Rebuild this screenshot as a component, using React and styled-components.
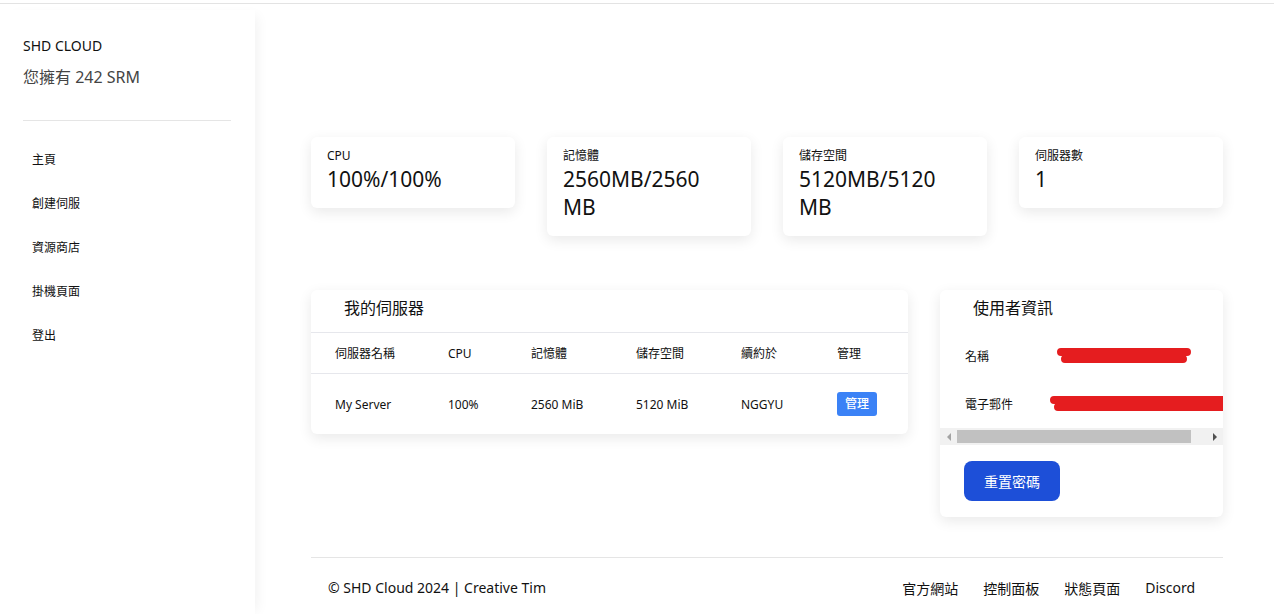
import React from "react";
import styled, { createGlobalStyle } from "styled-components";

const Global = createGlobalStyle`
  html, body { margin: 0; padding: 0; background: #fff; }
  body { font-family: "Noto Sans", "Noto Sans CJK TC", sans-serif; color: #111; }
  * { box-sizing: border-box; }
`;

const TopLine = styled.div`
  height: 4px;
  border-bottom: 1px solid #e3e3e3;
`;

const Layout = styled.div`
  display: flex;
  min-height: 610px;
`;

const Sidebar = styled.aside`
  width: 255px;
  flex-shrink: 0;
  margin-top: 6px;
  background: #fff;
  box-shadow: 8px 0 12px -6px rgba(0, 0, 0, 0.06);
  padding: 26px 24px 0 23px;
`;

const Brand = styled.div`
  font-size: 14px;
  line-height: 20px;
  color: #111;
`;

const Balance = styled.div`
  font-size: 16px;
  line-height: 24px;
  margin-top: 9px;
  color: #444;
`;

const Divider = styled.hr`
  border: none;
  border-top: 1px solid #e5e5e5;
  margin: 31px 0 17px;
`;

const Nav = styled.nav`
  display: flex;
  flex-direction: column;
`;

const NavItem = styled.a`
  display: block;
  font-size: 12px;
  line-height: 44px;
  padding-left: 9px;
  color: #111;
  text-decoration: none;
`;

const Main = styled.main`
  flex: 1;
  padding: 133px 51px 0 56px;
  display: flex;
  flex-direction: column;
`;

const Stats = styled.div`
  display: grid;
  grid-template-columns: repeat(4, 204px);
  gap: 32px;
  align-items: start;
`;

const Card = styled.div`
  background: #fff;
  border-radius: 6px;
  box-shadow: 0 4px 14px rgba(0, 0, 0, 0.09);
`;

const StatCard = styled(Card)`
  padding: 10px 16px 15px;
`;

const StatLabel = styled.div`
  font-size: 12px;
  line-height: 18px;
`;

const StatValue = styled.div`
  font-size: 21px;
  line-height: 28px;
  max-width: 155px;
`;

const Row = styled.div`
  display: grid;
  grid-template-columns: 597px 283px;
  gap: 32px;
  margin-top: 54px;
  align-items: start;
`;

const CardTitle = styled.div`
  font-size: 16px;
  line-height: 24px;
  padding: ${(p) => p.$pad};
`;

const TableGrid = styled.div`
  display: grid;
  grid-template-columns: 113px 83px 105px 105px 96px 1fr;
`;

const Cell = styled.div`
  font-size: 12px;
  padding-left: 24px;
  display: flex;
  align-items: center;
  height: ${(p) => (p.$head ? "41px" : "61px")};
  border-top: 1px solid #e6e7ec;
  color: #111;
`;

const ManageButton = styled.button`
  font-family: inherit;
  font-size: 12px;
  line-height: 24px;
  height: 24px;
  padding: 0 8px;
  border: none;
  border-radius: 3px;
  background: #3b82f6;
  color: #fff;
  font-weight: 500;
`;

const UserCard = styled(Card)`
  overflow: hidden;
  padding-bottom: 16px;
`;

const InfoArea = styled.div`
  padding-top: 12px;
  overflow: hidden;
`;

const InfoRow = styled.div`
  display: grid;
  grid-template-columns: 86px 1fr;
  height: 48px;
  align-items: center;
  padding-left: 25px;
  font-size: 12px;
`;

const Redact = styled.svg`
  display: block;
  margin-left: ${(p) => p.$ml}px;
  overflow: visible;
`;

const Scrollbar = styled.div`
  display: flex;
  align-items: center;
  height: 17px;
  background: #f1f1f1;
  margin-top: 0;
`;

const Arrow = styled.div`
  width: 17px;
  height: 17px;
  display: flex;
  align-items: center;
  justify-content: center;
  &::before {
    content: "";
    border-top: 4px solid transparent;
    border-bottom: 4px solid transparent;
    ${(p) =>
      p.$dir === "left"
        ? "border-right: 4px solid #a3a3a3;"
        : "border-left: 4px solid #505050;"}
  }
`;

const Thumb = styled.div`
  height: 13px;
  width: 234px;
  background: #c1c1c1;
`;

const Track = styled.div`
  flex: 1;
`;

const ResetButton = styled.button`
  font-family: inherit;
  margin: 16px 0 0 24px;
  width: 96px;
  height: 40px;
  border: none;
  border-radius: 8px;
  background: #1d4fd8;
  color: #fff;
  font-size: 14px;
`;

const Footer = styled.footer`
  margin-top: 40px;
  border-top: 1px solid #e5e5e5;
  display: flex;
  justify-content: space-between;
  align-items: center;
  height: 60px;
  padding: 0 28px 0 17px;
  font-size: 14px;
`;

const FooterLinks = styled.div`
  display: flex;
  gap: 25px;
`;

const FooterLink = styled.a`
  color: #111;
  text-decoration: none;
`;

const stats = [
  { label: "CPU", value: "100%/100%" },
  { label: "記憶體", value: "2560MB/2560 MB" },
  { label: "儲存空間", value: "5120MB/5120 MB" },
  { label: "伺服器數", value: "1" },
];

const heads = ["伺服器名稱", "CPU", "記憶體", "儲存空間", "續約於", "管理"];
const cells = ["My Server", "100%", "2560 MiB", "5120 MiB", "NGGYU"];

export default function App() {
  return (
    <>
      <Global />
      <TopLine />
      <Layout>
        <Sidebar>
          <Brand>SHD CLOUD</Brand>
          <Balance>您擁有 242 SRM</Balance>
          <Divider />
          <Nav>
            {["主頁", "創建伺服", "資源商店", "掛機頁面", "登出"].map((n) => (
              <NavItem key={n} href="#">{n}</NavItem>
            ))}
          </Nav>
        </Sidebar>
        <Main>
          <Stats>
            {stats.map((s) => (
              <StatCard key={s.label}>
                <StatLabel>{s.label}</StatLabel>
                <StatValue>{s.value}</StatValue>
              </StatCard>
            ))}
          </Stats>
          <Row>
            <Card>
              <CardTitle $pad="6px 0 12px 33px">我的伺服器</CardTitle>
              <TableGrid>
                {heads.map((h) => (
                  <Cell key={h} $head>{h}</Cell>
                ))}
                {cells.map((c) => (
                  <Cell key={c}>{c}</Cell>
                ))}
                <Cell>
                  <ManageButton>管理</ManageButton>
                </Cell>
              </TableGrid>
            </Card>
            <UserCard>
              <CardTitle $pad="6px 0 0 33px">使用者資訊</CardTitle>
              <InfoArea>
                <InfoRow>
                  <span>名稱</span>
                  <Redact $ml={6} width="134" height="18" viewBox="0 0 134 18">
                    <path d="M4 5 L130 5 M8 12 L126 12" stroke="#e51d1f" strokeWidth="8" strokeLinecap="round" />
                  </Redact>
                </InfoRow>
                <InfoRow>
                  <span>電子郵件</span>
                  <Redact $ml={-1} width="180" height="18" viewBox="0 0 180 18">
                    <path d="M4 5 L176 5 M8 12 L176 12" stroke="#e51d1f" strokeWidth="8" strokeLinecap="round" />
                  </Redact>
                </InfoRow>
              </InfoArea>
              <Scrollbar>
                <Arrow $dir="left" />
                <Thumb />
                <Track />
                <Arrow $dir="right" />
              </Scrollbar>
              <ResetButton>重置密碼</ResetButton>
            </UserCard>
          </Row>
          <Footer>
            <span>© SHD Cloud 2024 | Creative Tim</span>
            <FooterLinks>
              {["官方網站", "控制面板", "狀態頁面", "Discord"].map((l) => (
                <FooterLink key={l} href="#">{l}</FooterLink>
              ))}
            </FooterLinks>
          </Footer>
        </Main>
      </Layout>
    </>
  );
}
